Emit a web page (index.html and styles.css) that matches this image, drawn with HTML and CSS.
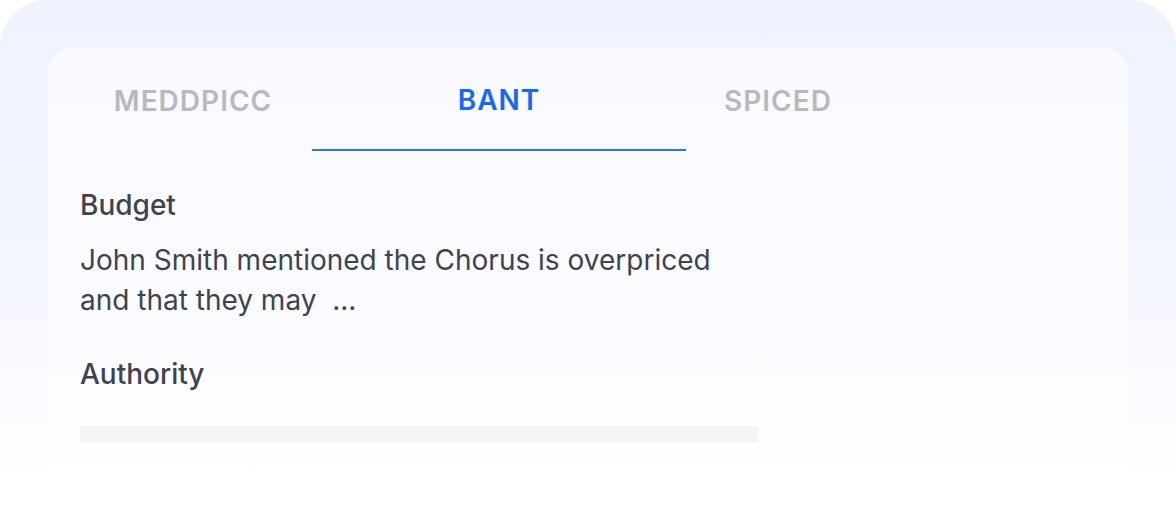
FILE: index.html
```html
<!DOCTYPE html>
<html lang="en">
<head>
  <meta charset="UTF-8" />
  <title>Qualification</title>
  <link rel="stylesheet" href="styles.css">
</head>
<body>
  <div class="frame">
    <div class="card">
      <div class="tabs">
        <div class="tab tab-first">MEDDPICC</div>
        <div class="tab active">BANT</div>
        <div class="tab tab-last">SPICED</div>
      </div>

      <div class="content">
        <h3 class="label">Budget</h3>
        <p class="text">John Smith mentioned the Chorus is overpriced and that they may&nbsp; ...</p>

        <h3 class="label">Authority</h3>
        <div class="skeleton"></div>
      </div>
    </div>
  </div>
</body>
</html>
```

FILE: styles.css
```css
html, body { margin: 0; padding: 0; background: #fff; }
body {
  width: 1176px;
  height: 515px;
  overflow: hidden;
  font-family: Inter, "Noto Sans", sans-serif;
}

.frame {
  height: 515px;
  padding: 48px 48px 0;
  box-sizing: border-box;
  background: linear-gradient(to bottom, #eef3fe 0%, #f2f5fe 45%, #fbfcff 80%, #fff 93%);
  border-radius: 46px 46px 0 0;
}

.card {
  height: 467px;
  box-sizing: border-box;
  background: linear-gradient(to bottom, #f8faff 0%, #fafbff 55%, #fdfeff 82%, #fff 95%);
  border-radius: 24px 24px 0 0;
  padding: 0 32px;
}

.tabs {
  display: flex;
  height: 103px;
}
.tab {
  box-sizing: border-box;
  display: flex;
  align-items: center;
  justify-content: center;
  padding-top: 2px;
  font-size: 28px;
  font-weight: 600;
  letter-spacing: 1px;
  color: #b8b9bd;
}
.tab-first { width: 232px; padding-right: 6px; }
.active {
  width: 374px;
  color: #1668f6;
  border-bottom: 2px solid #2577f5;
}
.tab-last { width: 184px; }

.content {
  width: 678px;
  padding-top: 36px;
}
.label {
  margin: 0;
  font-size: 28px;
  line-height: 36px;
  font-weight: 500;
  color: #40434f;
}
.text {
  margin: 17px 0 36px;
  font-size: 28px;
  line-height: 40px;
  color: #40434f;
}
.skeleton {
  margin-top: 34px;
  height: 16px;
  background: #f4f4f5;
}
```
